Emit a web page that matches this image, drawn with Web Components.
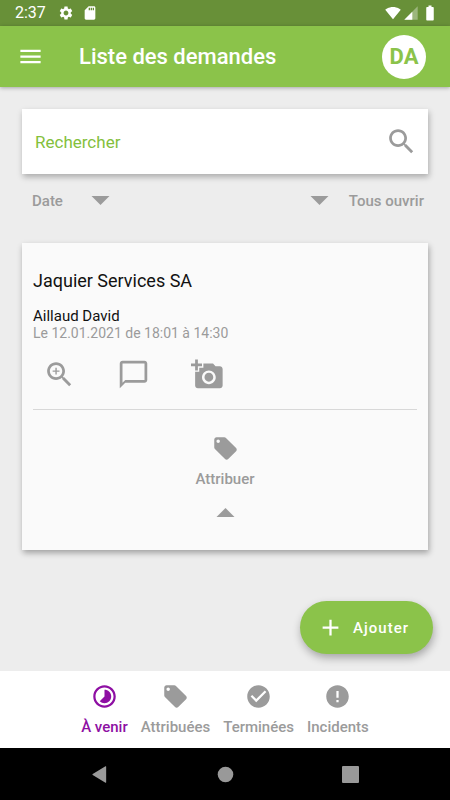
<!DOCTYPE html>
<html lang="fr">
<head>
<meta charset="utf-8">
<meta name="viewport" content="width=device-width, initial-scale=1">
<title>Liste des demandes</title>
<style>
  html, body { margin: 0; }
  body { font-family: Roboto, "Liberation Sans", sans-serif; background: #ededed; color: #111; --muted: #9b9b9b; }
</style>
</head>
<body>
<requests-app></requests-app>

<script>
const ICONS = {
  settings: '<path d="M19.14 12.94c.04-.3.06-.61.06-.94 0-.32-.02-.64-.07-.94l2.03-1.58c.18-.14.23-.41.12-.61l-1.92-3.32c-.12-.22-.37-.29-.59-.22l-2.39.96c-.5-.38-1.03-.7-1.62-.94l-.36-2.54c-.04-.24-.24-.41-.48-.41h-3.84c-.24 0-.43.17-.47.41l-.36 2.54c-.59.24-1.13.57-1.62.94l-2.39-.96c-.22-.08-.47 0-.59.22L2.74 8.87c-.12.21-.08.47.12.61l2.03 1.58c-.05.3-.09.63-.09.94s.02.64.07.94l-2.03 1.58c-.18.14-.23.41-.12.61l1.92 3.32c.12.22.37.29.59.22l2.39-.96c.5.38 1.03.7 1.62.94l.36 2.54c.05.24.24.41.48.41h3.84c.24 0 .44-.17.47-.41l.36-2.54c.59-.24 1.13-.56 1.62-.94l2.39.96c.22.08.47 0 .59-.22l1.92-3.32c.12-.22.07-.47-.12-.61l-2.01-1.58zM12 15.6c-1.98 0-3.6-1.62-3.6-3.6s1.62-3.6 3.6-3.6 3.6 1.62 3.6 3.6-1.62 3.6-3.6 3.6z"/>',
  sd: '<path d="M18 2h-8L4.02 8 4 20c0 1.100.9 2 2 2h12c1.100 0 2-.9 2-2V4c0-1.100-.9-2-2-2zm-6 6h-2V4h2v4zm3 0h-2V4h2v4zm3 0h-2V4h2v4z"/>',
  wifi: '<path d="M12.010 21.490L23.640 7c-.450-.340-4.930-4-11.640-4C5.280 3 .810 6.660.360 7l11.630 14.490.010.010.010-.010z"/>',
  signal: '<path opacity=".35" d="M2 22h20V2z"/><path d="M2 22h12V10z"/>',
  battery: '<path d="M15.670 4H14V2h-4v2H8.330C7.600 4 7 4.600 7 5.330v15.330C7 21.400 7.600 22 8.330 22h7.330c.740 0 1.340-.600 1.340-1.330V5.330C17 4.600 16.400 4 15.670 4z"/>',
  menu: '<path d="M3 18h18v-2H3v2zm0-5h18v-2H3v2zm0-7v2h18V6H3z"/>',
  search: '<path d="M15.5 14h-.79l-.28-.27C15.410 12.590 16 11.110 16 9.500 16 5.910 13.090 3 9.500 3S3 5.910 3 9.500 5.910 16 9.500 16c1.610 0 3.090-.590 4.230-1.570l.270.280v.790l5 4.990L20.490 19l-4.990-5zm-6 0C7.010 14 5 11.990 5 9.500S7.010 5 9.500 5 14 7.010 14 9.500 11.990 14 9.500 14z"/>',
  zoom: '<path d="M15.5 14h-.79l-.28-.27C15.410 12.590 16 11.110 16 9.500 16 5.910 13.090 3 9.500 3S3 5.910 3 9.500 5.910 16 9.500 16c1.610 0 3.090-.590 4.230-1.570l.270.280v.790l5 4.990L20.490 19l-4.990-5zm-6 0C7.010 14 5 11.990 5 9.500S7.010 5 9.500 5 14 7.010 14 9.500 11.990 14 9.500 14zM12 10h-2v2H9v-2H7V9h2V7h1v2h2v1z"/>',
  chat: '<path d="M20 2H4c-1.100 0-2 .9-2 2v18l4-4h14c1.100 0 2-.9 2-2V4c0-1.100-.9-2-2-2zm0 14H6l-2 2V4h16v12z"/>',
  photo: '<path d="M3 4V1h2v3h3v2H5v3H3V6H0V4h3zm3 6V7h3V4h7l1.830 2H21c1.100 0 2 .9 2 2v12c0 1.100-.9 2-2 2H5c-1.100 0-2-.9-2-2V10h3zm7 9c2.760 0 5-2.240 5-5s-2.240-5-5-5-5 2.240-5 5 2.240 5 5 5zm-3.200-5c0 1.770 1.430 3.200 3.200 3.200s3.200-1.430 3.200-3.200-1.430-3.200-3.200-3.200-3.200 1.430-3.200 3.200z"/>',
  tag: '<path d="M21.410 11.580l-9-9C12.050 2.220 11.550 2 11 2H4c-1.100 0-2 .9-2 2v7c0 .55.22 1.050.59 1.420l9 9c.36.36.86.58 1.410.58.55 0 1.050-.22 1.410-.59l7-7c.37-.36.59-.86.59-1.410 0-.55-.23-1.060-.59-1.420zM5.500 7C4.670 7 4 6.330 4 5.500S4.670 4 5.500 4 7 4.670 7 5.500 6.330 7 5.500 7z"/>',
  down: '<path d="M4 8h16l-8 8z"/>',
  up: '<path d="M4 16h16l-8-8z"/>',
  add: '<path d="M19 13h-6v6h-2v-6H5v-2h6V5h2v6h6v2z"/>',
  timelapse: '<path d="M16.240 7.760C15.070 6.590 13.540 6 12 6v6l-4.240 4.240c2.340 2.340 6.140 2.340 8.490 0 2.340-2.340 2.340-6.140-.010-8.480zM12 2C6.480 2 2 6.480 2 12s4.480 10 10 10 10-4.480 10-10S17.520 2 12 2zm0 18c-4.420 0-8-3.580-8-8s3.580-8 8-8 8 3.580 8 8-3.580 8-8 8z"/>',
  check: '<path d="M12 2C6.480 2 2 6.480 2 12s4.480 10 10 10 10-4.480 10-10S17.520 2 12 2zm-2 15l-5-5 1.410-1.410L10 14.170l7.590-7.590L19 8l-9 9z"/>',
  error: '<path d="M12 2C6.480 2 2 6.480 2 12s4.480 10 10 10 10-4.480 10-10S17.520 2 12 2zm1 15h-2v-2h2v2zm0-4h-2V7h2v6z"/>',
  back: '<path d="M20 1v22a.6.6 0 0 1-1 .5L1 12.600a.7.7 0 0 1 0-1.200L19 .5a.6.6 0 0 1 1 .5z"/>',
  home: '<circle cx="12" cy="12" r="11"/>',
  recents: '<rect x="0" y="0" width="24" height="24" rx="1.500"/>'
};

function define(name, html, setup) {
  const template = document.createElement('template');
  template.innerHTML = `<style>
    *, *::before, *::after { box-sizing: border-box; }
    button { font: inherit; color: inherit; background: none; border: 0; margin: 0; padding: 0; cursor: pointer; }
  </style>${html}`;
  customElements.define(name, class extends HTMLElement {
    connectedCallback() {
      if (this.shadowRoot) return;
      const root = this.attachShadow({ mode: 'open' });
      root.append(template.content.cloneNode(true));
      if (setup) setup(this, root);
    }
  });
}

define('m-icon', `
  <style>
    :host { display: block; flex: none; width: var(--size, 27px); height: var(--size, 27px); }
    svg { display: block; width: 100%; height: 100%; fill: currentColor; }
  </style>
  <svg viewBox="0 0 24 24" aria-hidden="true"></svg>`,
  (host, root) => { root.querySelector('svg').innerHTML = ICONS[host.getAttribute('name')]; });

define('status-bar', `
  <style>
    :host { display: flex; align-items: center; height: 26px; padding: 0 11px 0 15px; background: #689038; color: #fff; font-size: 16px; line-height: 26px; }
    .left, .right { display: flex; align-items: center; }
    .left { gap: 8px; }
    .left span { margin-right: 4px; }
    .right { margin-left: auto; gap: 2px; }
    m-icon { --size: 16px; }
    .right m-icon:last-child { --size: 18px; }
  </style>
  <div class="left"><span>2:37</span><m-icon name="settings"></m-icon><m-icon name="sd"></m-icon></div>
  <div class="right"><m-icon name="wifi"></m-icon><m-icon name="signal"></m-icon><m-icon name="battery"></m-icon></div>`);

define('app-bar', `
  <style>
    :host { display: flex; align-items: center; height: 61px; padding: 0 24px 0 17px; background: #8bc34a; color: #fff; box-shadow: 0 1px 4px rgba(0,0,0,.3); position: relative; }
    h1 { flex: 1; margin: 0 0 0 35px; font-size: 22px; line-height: 28px; font-weight: 500; }
    .avatar { width: 44px; height: 44px; border-radius: 50%; background: #fff; color: #8bc34a; font-size: 22px; line-height: 28px; font-weight: 700; }
  </style>
  <button aria-label="Menu"><m-icon name="menu"></m-icon></button>
  <h1><slot></slot></h1>
  <button class="avatar" aria-label="Compte DA">DA</button>`);

define('search-box', `
  <style>
    :host { display: flex; align-items: center; height: 65px; padding: 0 10px 0 13px; background: #fff; box-shadow: 1px 3px 6px rgba(0,0,0,.28); }
    input { flex: 1; min-width: 0; border: 0; outline: 0; padding: 0; background: none; font: 400 17px/24px Roboto, "Liberation Sans", sans-serif; color: #333; }
    input::placeholder { color: #84c03c; opacity: 1; }
    button { color: var(--muted); }
    m-icon { --size: 33px; }
  </style>
  <input type="text" placeholder="Rechercher" aria-label="Rechercher">
  <button aria-label="Lancer la recherche"><m-icon name="search"></m-icon></button>`);

define('filter-row', `
  <style>
    :host { display: flex; justify-content: space-between; padding: 0 4px 0 10px; color: var(--muted); font-size: 15px; line-height: 22px; font-weight: 500; }
    button { display: flex; align-items: center; }
    .sort { gap: 24px; }
    .open { gap: 16px; }
  </style>
  <button class="sort">Date<m-icon name="down"></m-icon></button>
  <button class="open"><m-icon name="down"></m-icon>Tous ouvrir</button>`);

define('request-card', `
  <style>
    :host { display: flex; flex-direction: column; padding: 25px 11px 24px; background: #fafafa; box-shadow: 1px 3px 6px rgba(0,0,0,.32); }
    h2 { margin: 0 0 14px; font-size: 18px; line-height: 26px; font-weight: 400; }
    .who { font-size: 15px; line-height: 17px; }
    .when { font-size: 14px; line-height: 17px; color: var(--muted); }
    .actions { display: flex; gap: 41px; padding: 16px 10px 18px; color: var(--muted); border-bottom: 1px solid #d8d8d8; }
    .actions m-icon { --size: 33px; }
    .assign { display: flex; flex-direction: column; align-items: center; align-self: center; gap: 6px; padding-top: 25px; color: var(--muted); font-size: 15px; line-height: 22px; font-weight: 500; }
    .toggle { align-self: center; margin-top: 9px; color: var(--muted); }
  </style>
  <h2><slot name="client"></slot></h2>
  <div class="who"><slot name="contact"></slot></div>
  <div class="when"><slot name="time"></slot></div>
  <div class="actions">
    <button aria-label="Voir le détail"><m-icon name="zoom"></m-icon></button>
    <button aria-label="Commenter"><m-icon name="chat"></m-icon></button>
    <button aria-label="Ajouter une photo"><m-icon name="photo"></m-icon></button>
  </div>
  <button class="assign"><m-icon name="tag"></m-icon>Attribuer</button>
  <button class="toggle" aria-label="Replier"><m-icon name="up"></m-icon></button>`);

define('add-button', `
  <style>
    :host { display: block; }
    button { display: flex; align-items: center; gap: 9px; height: 53px; padding: 0 24px 0 17px; border-radius: 27px; background: #8bc34a; color: #fff; font-size: 15px; font-weight: 500; letter-spacing: 1px; box-shadow: 1px 4px 8px rgba(0,0,0,.3); }
  </style>
  <button><m-icon name="add"></m-icon><slot></slot></button>`);

define('tab-item', `
  <style>
    :host { display: block; color: var(--muted); font-size: 15px; line-height: 22px; font-weight: 500; }
    :host([active]) { color: #8e0fa3; }
    a { display: flex; flex-direction: column; align-items: center; gap: 6px; color: inherit; text-decoration: none; }
  </style>
  <a href="#"><m-icon></m-icon><span><slot></slot></span></a>`,
  (host, root) => {
    const icon = document.createElement('m-icon');
    icon.setAttribute('name', host.getAttribute('icon'));
    root.querySelector('m-icon').replaceWith(icon);
    if (host.hasAttribute('active')) root.querySelector('a').setAttribute('aria-current', 'page');
  });

define('tab-bar', `
  <style>
    :host { display: block; background: #fff; }
    nav { display: flex; justify-content: center; gap: 13px; padding: 12px 8px 10px; }
  </style>
  <nav><slot></slot></nav>`);

define('system-nav', `
  <style>
    :host { display: flex; justify-content: center; align-items: center; gap: 108px; height: 52px; background: #000; color: #999; }
    m-icon { --size: 17px; }
  </style>
  <button aria-label="Retour"><m-icon name="back"></m-icon></button>
  <button aria-label="Accueil"><m-icon name="home"></m-icon></button>
  <button aria-label="Applications récentes"><m-icon name="recents"></m-icon></button>`);

define('requests-app', `
  <style>
    :host { display: flex; flex-direction: column; min-height: 100vh; }
    main { flex: 1; display: flex; flex-direction: column; padding: 22px 22px 17px; }
    filter-row { margin: 13px 0 29px; }
    add-button { align-self: flex-end; margin: auto -5px 0 0; }
  </style>
  <status-bar></status-bar>
  <app-bar>Liste des demandes</app-bar>
  <main>
    <search-box></search-box>
    <filter-row></filter-row>
    <request-card>
      <span slot="client">Jaquier Services SA</span>
      <span slot="contact">Aillaud David</span>
      <span slot="time">Le 12.01.2021 de 18:01 à 14:30</span>
    </request-card>
    <add-button>Ajouter</add-button>
  </main>
  <tab-bar>
    <tab-item icon="timelapse" active>À venir</tab-item>
    <tab-item icon="tag">Attribuées</tab-item>
    <tab-item icon="check">Terminées</tab-item>
    <tab-item icon="error">Incidents</tab-item>
  </tab-bar>
  <system-nav></system-nav>`);
</script>
</body>
</html>
